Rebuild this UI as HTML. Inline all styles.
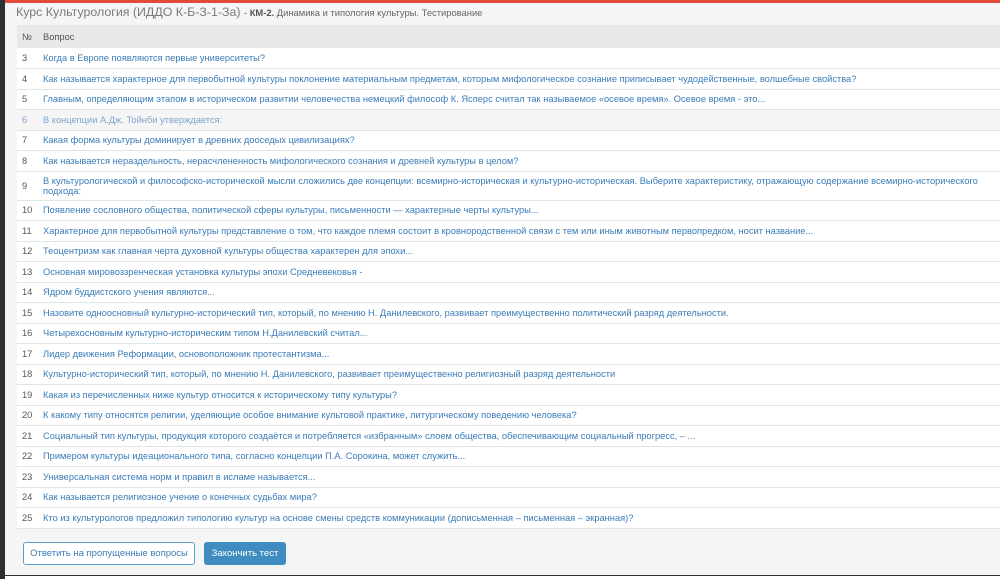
<!DOCTYPE html>
<html><head><meta charset="utf-8"><style>
*{margin:0;padding:0;box-sizing:border-box}
body{width:1000px;height:579px;overflow:hidden;background:#f5f5f5;font-family:"Liberation Sans",sans-serif;position:relative}
.left{position:absolute;left:0;top:0;width:5px;height:579px;background:#2b2f33}
.top{position:absolute;left:0;top:0;width:1000px;height:3px;background:#e04b3a}
.title{position:absolute;left:16px;top:5px;font-size:12.4px;color:#7a7a7a;white-space:nowrap}
.title small{font-size:9.4px;color:#666}
.title b{font-size:9.4px;color:#555}
table{position:absolute;left:17px;top:25px;width:983px;border-collapse:collapse;font-size:9.3px}
th{background:#e8e8e8;height:23px;text-align:left;font-weight:normal;color:#555;font-size:9.3px}
td{height:20.5px;border-bottom:1px solid #dde6e6;background:#fff;color:#3a7cb8;line-height:10px;vertical-align:middle}
td:first-child,th:first-child{width:26px;padding-left:5px;color:#555}
tr.g td{background:#f5f5f5;color:#7ea6cc}
tr.d td{height:29px}
.b1{position:absolute;left:23px;top:542px;width:172px;height:23px;border:1px solid #5a9fd0;border-radius:3px;background:#fff;color:#3a7cb8;font-size:9.5px;text-align:center;line-height:21px}
.b2{position:absolute;left:204px;top:542px;width:82px;height:23px;border-radius:3px;background:#3f8cc0;color:#fff;font-size:9.5px;text-align:center;line-height:23px}
.bot{position:absolute;left:5px;top:575px;width:995px;height:4px;border-top:1px solid #333;background:#fff}
</style></head><body>
<div class="top"></div>
<div class="title">Курс Культурология (ИДДО К-Б-З-1-За) <small>- <b>КМ-2.</b> Динамика и типология культуры. Тестирование</small></div>
<table>
<tr><th>№</th><th>Вопрос</th></tr>
<tr><td>3</td><td>Когда в Европе появляются первые университеты?</td></tr>
<tr><td>4</td><td>Как называется характерное для первобытной культуры поклонение материальным предметам, которым мифологическое сознание приписывает чудодейственные, волшебные свойства?</td></tr>
<tr><td>5</td><td>Главным, определяющим этапом в историческом развитии человечества немецкий философ К. Ясперс считал так называемое «осевое время». Осевое время - это...</td></tr>
<tr class="g"><td>6</td><td>В концепции А.Дж. Тойнби утверждается:</td></tr>
<tr><td>7</td><td>Какая форма культуры доминирует в древних дооседых цивилизациях?</td></tr>
<tr><td>8</td><td>Как называется нераздельность, нерасчлененность мифологического сознания и древней культуры в целом?</td></tr>
<tr class="d"><td>9</td><td>В культурологической и философско-исторической мысли сложились две концепции: всемирно-историческая и культурно-историческая. Выберите характеристику, отражающую содержание всемирно-исторического подхода:</td></tr>
<tr><td>10</td><td>Появление сословного общества, политической сферы культуры, письменности — характерные черты культуры...</td></tr>
<tr><td>11</td><td>Характерное для первобытной культуры представление о том, что каждое племя состоит в кровнородственной связи с тем или иным животным первопредком, носит название...</td></tr>
<tr><td>12</td><td>Теоцентризм как главная черта духовной культуры общества характерен для эпохи...</td></tr>
<tr><td>13</td><td>Основная мировоззренческая установка культуры эпохи Средневековья -</td></tr>
<tr><td>14</td><td>Ядром буддистского учения являются...</td></tr>
<tr><td>15</td><td>Назовите одноосновный культурно-исторический тип, который, по мнению Н. Данилевского, развивает преимущественно политический разряд деятельности.</td></tr>
<tr><td>16</td><td>Четырехосновным культурно-историческим типом Н.Данилевский считал...</td></tr>
<tr><td>17</td><td>Лидер движения Реформации, основоположник протестантизма...</td></tr>
<tr><td>18</td><td>Культурно-исторический тип, который, по мнению Н. Данилевского, развивает преимущественно религиозный разряд деятельности</td></tr>
<tr><td>19</td><td>Какая из перечисленных ниже культур относится к историческому типу культуры?</td></tr>
<tr><td>20</td><td>К какому типу относятся религии, уделяющие особое внимание культовой практике, литургическому поведению человека?</td></tr>
<tr><td>21</td><td>Социальный тип культуры, продукция которого создаётся и потребляется «избранным» слоем общества, обеспечивающим социальный прогресс, – ...</td></tr>
<tr><td>22</td><td>Примером культуры идеационального типа, согласно концепции П.А. Сорокина, может служить...</td></tr>
<tr><td>23</td><td>Универсальная система норм и правил в исламе называется...</td></tr>
<tr><td>24</td><td>Как называется религиозное учение о конечных судьбах мира?</td></tr>
<tr><td>25</td><td>Кто из культурологов предложил типологию культур на основе смены средств коммуникации (дописьменная – письменная – экранная)?</td></tr>
</table>
<div class="b1">Ответить на пропущенные вопросы</div>
<div class="b2">Закончить тест</div>
<div class="bot"></div>
<div class="left"></div>
</body></html>
